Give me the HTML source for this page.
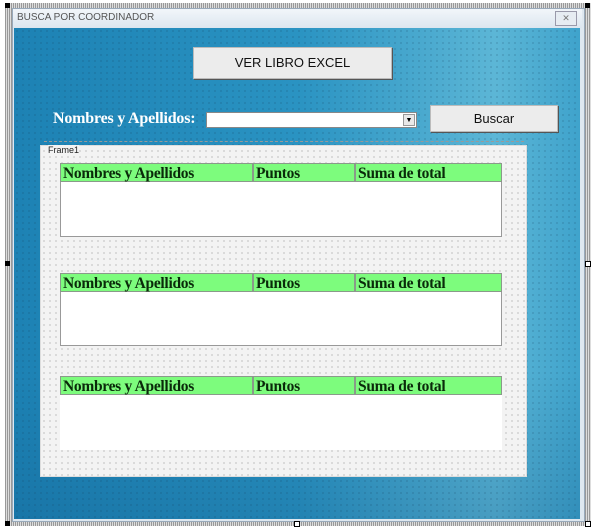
<!DOCTYPE html>
<html><head><style>
body{margin:0;width:600px;height:529px;background:#fff;position:relative;overflow:hidden;font-family:"Liberation Sans",sans-serif}
.abs{position:absolute}
.hatch{background:repeating-linear-gradient(90deg,#999 0 1px,#ddd 1px 2px)}
.dots{background-image:radial-gradient(circle,rgba(0,0,0,.35) 0.6px,transparent 0.9px);background-size:6px 6px}
.dotsl{background-image:radial-gradient(circle,rgba(20,60,90,.35) 0.6px,transparent 0.9px);background-size:6px 6px}
.hdr{position:absolute;height:19px;background:#7dfc7d;border:1px solid #8a9a8a;box-sizing:border-box;font-family:"Liberation Serif",serif;font-weight:bold;font-size:15.5px;letter-spacing:-0.3px;color:#0a2a0a;line-height:19px;padding-left:2px;white-space:nowrap}
.btn{position:absolute;background:#ececec;border:1px solid #bbb;box-shadow:1px 1px 0 #555;font-size:13px;color:#111;text-align:center}
</style></head><body>
<div class="abs hatch" style="left:5px;top:3px;width:586px;height:523px"></div>
<div class="abs" style="left:12px;top:8px;width:571px;height:512px;background:#dfe8f0;border:1px solid #9ab"></div>
<div class="abs" style="left:13px;top:9px;width:569px;height:19px;background:linear-gradient(#f2f6fa,#dce6ef)"></div>
<div class="abs" style="left:17px;top:12px;font-size:10px;color:#555">BUSCA POR COORDINADOR</div>
<div class="abs" style="left:555px;top:11px;width:20px;height:13px;border:1px solid #99a;background:#e6ecf2;font-size:9px;color:#777;text-align:center;line-height:13px">✕</div>
<div class="abs" style="left:14px;top:28px;width:566px;height:491px;background:linear-gradient(180deg,rgba(0,0,0,0) 70%,rgba(10,80,130,.25) 100%),linear-gradient(90deg,#1d82b4 0%,#2a93c2 50%,#5cb6d6 85%,#3fa3cc 100%)"></div>
<div class="abs dotsl" style="left:14px;top:28px;width:566px;height:491px"></div>
<div class="btn" style="left:193px;top:47px;width:197px;height:30px;line-height:30px">VER LIBRO EXCEL</div>
<div class="abs" style="left:53px;top:110px;font-family:'Liberation Serif',serif;font-weight:bold;font-size:16px;letter-spacing:-0.2px;color:#fff">Nombres y Apellidos:</div>
<div class="abs" style="left:206px;top:112px;width:211px;height:16px;background:#fff;border:1px solid #888;box-sizing:border-box"></div>
<div class="abs" style="left:403px;top:114px;width:12px;height:12px;background:#e8e8e8;border:1px solid #999;box-sizing:border-box;font-size:7px;text-align:center;line-height:11px">▼</div>
<div class="btn" style="left:430px;top:105px;width:126px;height:25px;line-height:25px">Buscar</div>
<div class="abs" style="left:40px;top:145px;width:487px;height:332px;background:#f3f3f3;border:1px solid #ddd;box-sizing:border-box"></div>
<div class="abs dots" style="left:41px;top:148px;width:485px;height:328px;opacity:.7"></div>
<div class="abs" style="left:44px;top:141px;border-top:1px dashed #999;width:480px"></div>
<div class="abs" style="left:48px;top:145px;font-size:9px;color:#222;background:#f3f3f3">Frame1</div>

<div class="abs" style="left:60px;top:163px;width:442px;height:74px;background:#fff;border:1px solid #999;box-sizing:border-box"></div>
<div class="hdr" style="left:60px;top:163px;width:193px">Nombres y Apellidos</div>
<div class="hdr" style="left:253px;top:163px;width:102px">Puntos</div>
<div class="hdr" style="left:355px;top:163px;width:147px">Suma de total</div>

<div class="abs" style="left:60px;top:273px;width:442px;height:73px;background:#fff;border:1px solid #999;box-sizing:border-box"></div>
<div class="hdr" style="left:60px;top:273px;width:193px">Nombres y Apellidos</div>
<div class="hdr" style="left:253px;top:273px;width:102px">Puntos</div>
<div class="hdr" style="left:355px;top:273px;width:147px">Suma de total</div>

<div class="abs" style="left:60px;top:376px;width:442px;height:74px;background:#fff"></div>
<div class="hdr" style="left:60px;top:376px;width:193px">Nombres y Apellidos</div>
<div class="hdr" style="left:253px;top:376px;width:102px">Puntos</div>
<div class="hdr" style="left:355px;top:376px;width:147px">Suma de total</div>

<div class="abs" style="left:5px;top:3px;width:5px;height:5px;background:#000"></div>
<div class="abs" style="left:585px;top:3px;width:5px;height:5px;background:#000"></div>
<div class="abs" style="left:5px;top:521px;width:5px;height:5px;background:#000"></div>
<div class="abs" style="left:294px;top:521px;width:4px;height:4px;background:#fff;border:1px solid #000"></div>
<div class="abs" style="left:585px;top:521px;width:4px;height:4px;background:#fff;border:1px solid #000"></div>
<div class="abs" style="left:585px;top:261px;width:4px;height:4px;background:#fff;border:1px solid #000"></div>
<div class="abs" style="left:5px;top:261px;width:5px;height:5px;background:#000"></div>
</body></html>
